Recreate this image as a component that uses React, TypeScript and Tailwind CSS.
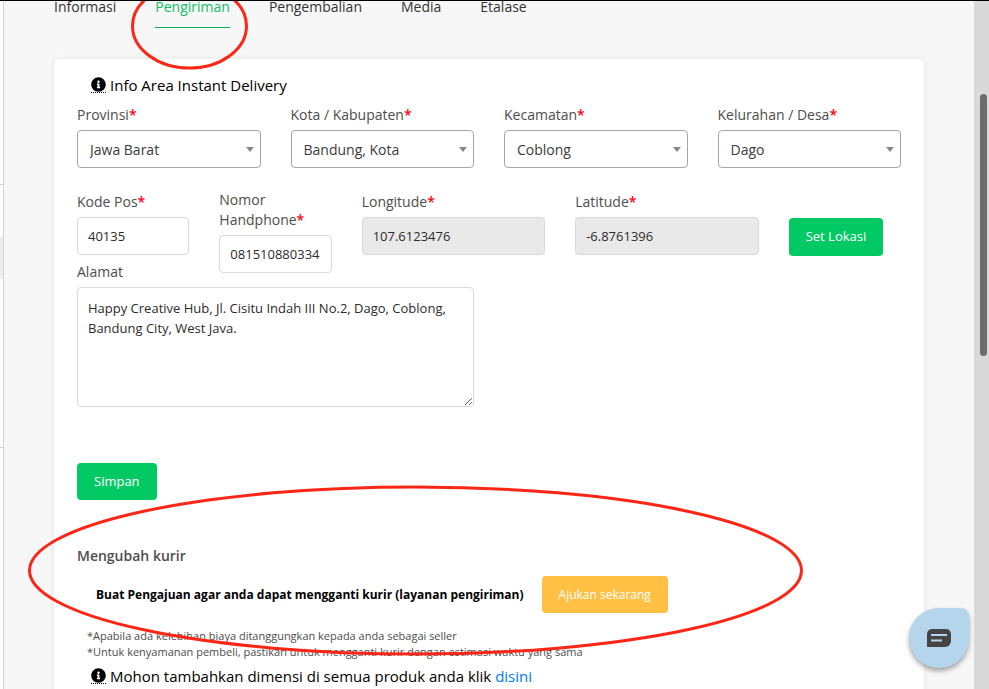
import type { ReactNode } from "react";
import { FaInfoCircle } from "react-icons/fa";

const tabs = ["Informasi", "Pengiriman", "Pengembalian", "Media", "Etalase"];

const areas = [
  { id: "provinsi", label: "Provinsi", value: "Jawa Barat" },
  { id: "kota", label: "Kota / Kabupaten", value: "Bandung, Kota" },
  { id: "kecamatan", label: "Kecamatan", value: "Coblong" },
  { id: "kelurahan", label: "Kelurahan / Desa", value: "Dago" },
];

function FieldLabel({ htmlFor, required = true, children }: { htmlFor: string; required?: boolean; children: ReactNode }) {
  return (
    <label htmlFor={htmlFor} className="mb-[5px] flex min-h-[22px] w-fit items-end text-sm leading-5 text-[#4d4d4d]">
      <span>
        {children}
        {required && <span className="font-semibold text-[#ff0018]">*</span>}
      </span>
    </label>
  );
}

function SelectField({ id, label, value }: { id: string; label: string; value: string }) {
  return (
    <div>
      <FieldLabel htmlFor={id}>{label}</FieldLabel>
      <div className="relative">
        <select id={id} defaultValue={value} className="h-[38px] w-full appearance-none rounded border border-[#a6a6a6] bg-white pt-px pr-6 pl-3 text-sm text-[#3b3b3b]">
          <option>{value}</option>
        </select>
        <svg viewBox="0 0 8 5" className="pointer-events-none absolute top-[17px] right-[7px] h-[5px] w-2 fill-[#888]">
          <path d="M0 0h8L4 5z" />
        </svg>
      </div>
    </div>
  );
}

function TextField({ id, label, value, disabled = false }: { id: string; label: string; value: string; disabled?: boolean }) {
  return (
    <>
      <FieldLabel htmlFor={id}>{label}</FieldLabel>
      <input
        id={id}
        type="text"
        defaultValue={value}
        disabled={disabled}
        className="h-[38px] w-full rounded border border-[#d9d9d9] bg-white px-[10px] text-[13px] text-[#2b2b2b] disabled:bg-[#e9e9e9]"
      />
    </>
  );
}

function InfoLine({ children }: { children: ReactNode }) {
  return (
    <p className="flex items-center gap-1 pl-[14px] text-[15px] leading-5 text-black">
      <span className="border-b border-dotted border-black">
        <FaInfoCircle className="size-[15px]" />
      </span>
      <span>{children}</span>
    </p>
  );
}

export default function App() {
  return (
    <div className="relative flex h-screen overflow-hidden border-t border-black bg-[#f7f7f7] font-['Open_Sans','Noto_Sans',sans-serif]">
      <aside className="flex w-1 shrink-0 flex-col border-r border-[#d4d4d4] bg-white">
        <div className="h-[184px] border-b border-[#d4d4d4]" />
        <div className="mt-[52px] h-[42px] bg-[#ededed]" />
        <div className="h-[169px] border-b border-[#d4d4d4]" />
      </aside>

      <main className="min-w-0 flex-1 overflow-hidden px-[50px]">
        <nav className="flex gap-[39px] text-sm leading-3 text-[#333]">
          {tabs.map((tab) => (
            <a
              key={tab}
              href="#"
              className={tab === "Pengiriman" ? "h-[27px] border-b border-[#03ac5c] text-[#10bf65]" : "h-[27px]"}
            >
              {tab}
            </a>
          ))}
        </nav>

        <section className="mt-[31px] rounded-md bg-white px-[23px] pt-4 pb-10 shadow-[0_0_6px_rgba(0,0,0,0.08)]">
          <form>
            <InfoLine>Info Area Instant Delivery</InfoLine>
            <div className="mt-2 grid grid-cols-4 gap-x-[30px]">
              {areas.map((area) => (
                <SelectField key={area.id} {...area} />
              ))}
            </div>
            <div className="mt-[22px] grid grid-cols-12 gap-x-[30px]">
              <div className="col-span-2">
                <TextField id="kodepos" label="Kode Pos" value="40135" />
              </div>
              <div className="col-span-2">
                <TextField id="handphone" label="Nomor Handphone" value="081510880334" />
              </div>
              <div className="col-span-3">
                <TextField id="longitude" label="Longitude" value="107.6123476" disabled />
              </div>
              <div className="col-span-3">
                <TextField id="latitude" label="Latitude" value="-6.8761396" disabled />
              </div>
              <div className="col-span-2 pt-7">
                <button type="button" className="h-[38px] rounded bg-[#03c965] px-[17px] text-[13px] whitespace-nowrap text-white">
                  Set Lokasi
                </button>
              </div>
            </div>
            <div className="-mt-[13px] grid grid-cols-2 gap-x-[30px]">
              <div>
                <FieldLabel htmlFor="alamat" required={false}>
                  Alamat
                </FieldLabel>
                <textarea
                  id="alamat"
                  defaultValue="Happy Creative Hub, Jl. Cisitu Indah III No.2, Dago, Coblong, Bandung City, West Java."
                  className="block h-[120px] w-full rounded border border-[#d9d9d9] bg-white px-[10px] py-[10px] text-[13px] leading-5 text-[#2b2b2b]"
                />
              </div>
            </div>
            <button type="submit" className="mt-14 h-[37px] rounded bg-[#03c965] px-[17px] text-[13px] text-white">
              Simpan
            </button>
          </form>

          <h2 className="mt-[46px] text-sm leading-5 font-semibold text-[#4d4d4d]">Mengubah kurir</h2>
          <div className="mt-[10px] flex items-center gap-[18px] pl-[19px]">
            <p className="text-xs font-bold text-black">Buat Pengajuan agar anda dapat mengganti kurir (layanan pengiriman)</p>
            <button type="button" className="h-[37px] rounded bg-[#ffc043] px-[17px] text-xs text-white">
              Ajukan sekarang
            </button>
          </div>
          <div className="mt-[15px] pl-[10px] text-[11px] leading-4 text-[#4d4d4d]">
            <p>*Apabila ada kelebihan biaya ditanggungkan kepada anda sebagai seller</p>
            <p>*Untuk kenyamanan pembeli, pastikan untuk mengganti kurir dengan estimasi waktu yang sama</p>
          </div>
          <div className="mt-[6px]">
            <InfoLine>
              Mohon tambahkan dimensi di semua produk anda klik{" "}
              <a href="#" className="text-[#007bff]">
                disini
              </a>
            </InfoLine>
          </div>
        </section>
      </main>

      <div className="w-[15px] shrink-0 bg-[#d9d9d9] pt-[93px] pl-[6px]">
        <div className="h-[262px] w-[7px] rounded-full bg-[#6c6c6c]" />
      </div>

      <button
        type="button"
        aria-label="Chat"
        className="absolute right-5 bottom-[21px] flex size-[60px] items-center justify-center rounded-[30px] rounded-tr-lg bg-[#b5d5ec] shadow-[0_3px_5px_rgba(0,0,0,0.35)]"
      >
        <svg viewBox="0 0 24 18" className="h-[18px] w-6">
          <path d="M5 0h14a5 5 0 0 1 5 5v7a6 6 0 0 1-6 6H0V5a5 5 0 0 1 5-5z" fill="#444" />
          <path d="M4 6h16M4 11.500h11" stroke="#b5d5ec" strokeWidth="2" />
        </svg>
      </button>

      <svg className="pointer-events-none absolute inset-0 h-full w-full" fill="none" stroke="#fc2617" strokeWidth="3">
        <ellipse cx="189.500" cy="25" rx="57" ry="42" />
        <ellipse cx="415.500" cy="569.500" rx="386" ry="83.500" />
      </svg>
    </div>
  );
}
